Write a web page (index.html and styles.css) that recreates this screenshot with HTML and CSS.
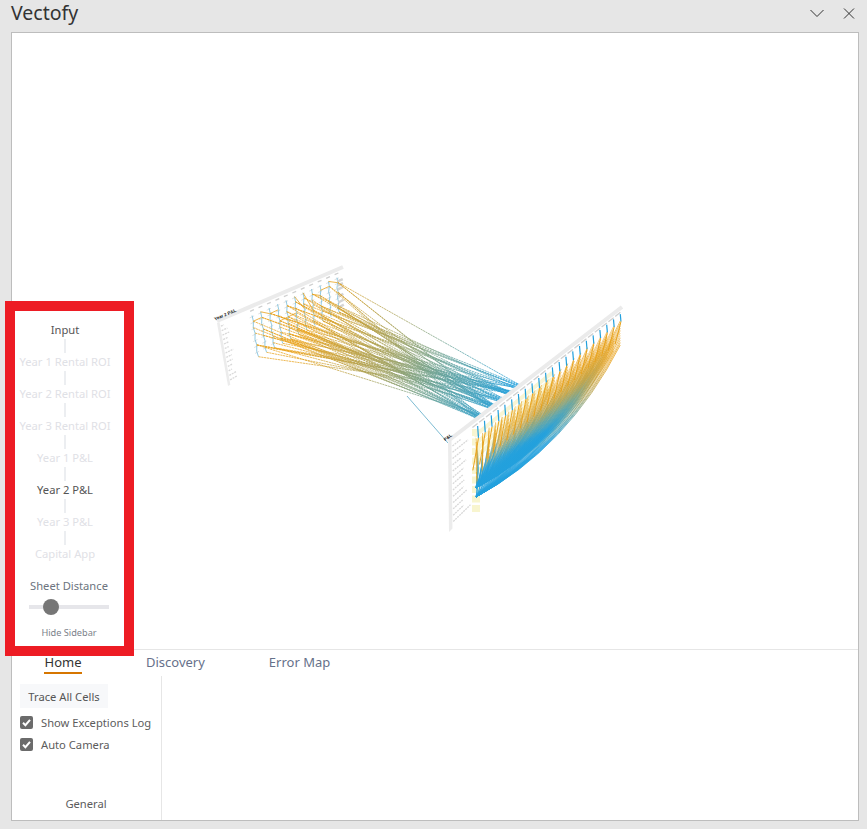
FILE: index.html
```html
<!DOCTYPE html>
<html lang="en">
<head>
  <meta charset="UTF-8" />
  <title>Vectofy</title>
  <link rel="stylesheet" href="styles.css">
</head>
<body>
  <div class="taskpane">
    <div class="titlebar">
      <span class="title">Vectofy</span>
      <div class="window-btns">
        <svg width="16" height="16" viewBox="0 0 16 16"><path d="M1.500 4 L8 10.500 L14.500 4" fill="none" stroke="#333" stroke-width="1"/></svg>
        <svg width="16" height="16" viewBox="0 0 16 16"><path d="M3 2.500 L13 12.500 M13 2.500 L3 12.500" fill="none" stroke="#333" stroke-width="1"/></svg>
      </div>
    </div>

    <div class="pane">
      <div class="canvas">
        <svg id="diagram" viewBox="12 33 846 616"></svg>
      </div>

      <div class="tabs">
        <span class="tab active">Home</span>
        <span class="tab tab-discovery">Discovery</span>
        <span class="tab tab-error">Error Map</span>
      </div>

      <div class="ribbon">
        <div class="group">
          <button class="trace-btn">Trace All Cells</button>
          <label class="check"><span class="box"><svg width="13" height="13" viewBox="0 0 13 13"><path d="M3 6.800 L5.400 9.200 L10 3.800" fill="none" stroke="#fff" stroke-width="2"/></svg></span>Show Exceptions Log</label>
          <label class="check"><span class="box"><svg width="13" height="13" viewBox="0 0 13 13"><path d="M3 6.800 L5.400 9.200 L10 3.800" fill="none" stroke="#fff" stroke-width="2"/></svg></span>Auto Camera</label>
          <div class="group-name">General</div>
        </div>
      </div>
    </div>

    <!-- sheet list, sits over the canvas -->
    <div class="sidebar">
      <div class="steps">
        <div class="step on">Input</div>
        <div class="link"></div>
        <div class="step">Year 1 Rental ROI</div>
        <div class="link"></div>
        <div class="step">Year 2 Rental ROI</div>
        <div class="link"></div>
        <div class="step">Year 3 Rental ROI</div>
        <div class="link"></div>
        <div class="step">Year 1 P&amp;L</div>
        <div class="link"></div>
        <div class="step on">Year 2 P&amp;L</div>
        <div class="link"></div>
        <div class="step">Year 3 P&amp;L</div>
        <div class="link"></div>
        <div class="step">Capital App</div>
      </div>
      <div class="distance">Sheet Distance</div>
      <div class="slider"><div class="thumb"></div></div>
      <div class="hide-link">Hide Sidebar</div>
    </div>
  </div>

  <script src="script.js"></script>
</body>
</html>
```

FILE: styles.css
```css
* {
  box-sizing: border-box;
}

html, body {
  margin: 0;
  height: 100%;
}

body {
  font-family: "Noto Sans", "Open Sans", sans-serif;
  background-color: #e6e6e6;
  color: #3c4043;
  overflow: hidden;
}

.taskpane {
  position: relative;
  height: 829px;
  display: flex;
  flex-direction: column;
  padding: 0 8px 8px 11px;
}

.titlebar {
  height: 32px;
  display: flex;
  align-items: flex-start;
  justify-content: space-between;
  flex-shrink: 0;
}

.title {
  font-size: 19.500px;
  line-height: 26px;
  color: #333;
}

.window-btns {
  display: flex;
  gap: 16px;
  padding: 6px 2px 0 0;
}

.pane {
  flex: 1;
  display: flex;
  flex-direction: column;
  background-color: #fff;
  border: 1px solid #bdbdbd;
  min-height: 0;
}

.canvas {
  height: 617px;
  border-bottom: 1px solid #e6e6e6;
  flex-shrink: 0;
}

#diagram {
  display: block;
  width: 100%;
  height: 100%;
}

.tabs {
  height: 26px;
  display: flex;
  font-size: 13px;
  color: #66718a;
  flex-shrink: 0;
}

.tab {
  height: 24px;
  line-height: 24px;
}

.tab.active {
  margin-left: 32px;
  width: 38px;
  text-align: center;
  color: #333;
  border-bottom: 2px solid #d67600;
}

.tab-discovery {
  margin-left: 64px;
}

.tab-error {
  margin-left: 64px;
}

.ribbon {
  flex: 1;
  display: flex;
  min-height: 0;
}

.group {
  width: 150px;
  border-right: 1px solid #e6e6e6;
  padding: 8px 0 0 8px;
  display: flex;
  flex-direction: column;
  align-items: flex-start;
}

.trace-btn {
  width: 88px;
  height: 24px;
  border: none;
  padding: 0;
  background-color: #f7f8fa;
  font-family: inherit;
  font-size: 11.200px;
  color: #555;
  margin-bottom: 8px;
}

.check {
  display: flex;
  align-items: center;
  height: 13px;
  margin-bottom: 9px;
  font-size: 11.200px;
  color: #5c5c5c;
  white-space: nowrap;
}

.box {
  width: 13px;
  height: 13px;
  margin-right: 8px;
  background-color: #6b6b6b;
  border-radius: 2px;
  display: block;
}

.box svg {
  display: block;
}

.group-name {
  margin-top: auto;
  width: 132px;
  text-align: center;
  font-size: 11.200px;
  color: #5c5c5c;
  line-height: 16px;
  margin-bottom: 8px;
}

.sidebar {
  position: absolute;
  left: 5px;
  top: 301px;
  width: 129px;
  height: 355px;
  background-color: #fff;
  border: 10px solid #ed1c24;
  display: flex;
  flex-direction: column;
  align-items: center;
}

.steps {
  width: 100px;
  margin-left: -9px;
  padding-top: 10px;
  display: flex;
  flex-direction: column;
  align-items: center;
}

.step {
  height: 18px;
  line-height: 18px;
  font-size: 11.200px;
  color: #dfe1e6;
  white-space: nowrap;
}

.step.on {
  color: #555;
}

.link {
  width: 2px;
  height: 14px;
  background-color: #eceef1;
}

.distance {
  margin-top: 14px;
  margin-left: -1px;
  height: 18px;
  line-height: 18px;
  font-size: 11.200px;
  color: #6c747e;
  white-space: nowrap;
}

.slider {
  position: relative;
  margin-top: 10px;
  margin-left: -1px;
  width: 80px;
  height: 4px;
  background-color: #e6e6ea;
}

.thumb {
  position: absolute;
  left: 14px;
  top: -6px;
  width: 16px;
  height: 16px;
  border-radius: 50%;
  background-color: #767676;
}

.hide-link {
  margin-top: 17px;
  margin-left: -1px;
  font-size: 9.200px;
  line-height: 14px;
  color: #7b818a;
}
```

FILE: script.js
```js
const svg = document.getElementById("diagram");
const NS = "http://www.w3.org/2000/svg";

// small seeded random so the picture is the same every time
let seed = 42;
function rnd() {
  seed = (seed * 16807) % 2147483647;
  return seed / 2147483647;
}

function add(tag, attrs, parent) {
  const el = document.createElementNS(NS, tag);
  for (const k in attrs) el.setAttribute(k, attrs[k]);
  (parent || svg).appendChild(el);
  return el;
}

function gradient(id, x1, y1, x2, y2, stops) {
  const g = add("linearGradient", { id, gradientUnits: "userSpaceOnUse", x1, y1, x2, y2 }, defs);
  stops.forEach(s => add("stop", { offset: s[0], "stop-color": s[1] }, g));
}

const defs = add("defs", {});
gradient("across", 310, 320, 510, 400, [[0, "#e8a21c"], [0.4, "#a3a25f"], [0.7, "#5fa3a3"], [1, "#22a0dd"]]);

// point on a sheet, u along the top edge and v down it
function onSheet(s, u, v) {
  const tx = s.a[0] + (s.b[0] - s.a[0]) * u, ty = s.a[1] + (s.b[1] - s.a[1]) * u;
  const bx = s.d[0] + (s.c[0] - s.d[0]) * u, by = s.d[1] + (s.c[1] - s.d[1]) * u;
  return [tx + (bx - tx) * v, ty + (by - ty) * v];
}

function drawSheet(s, title, labelEnd, rows) {
  // header strip
  const p1 = onSheet(s, 0, 0), p2 = onSheet(s, 1, 0);
  add("line", { x1: p1[0], y1: p1[1] - 2, x2: p2[0], y2: p2[1] - 2, stroke: "#ebebeb", "stroke-width": 4 });
  // label column, reads as blurred text at this distance
  add("polygon", {
    points: [onSheet(s, 0, 0), onSheet(s, 0.02, 0), onSheet(s, 0.02, 1), onSheet(s, 0, 1)].join(" "),
    fill: "#ececec"
  });
  for (let i = 0; i < rows; i++) {
    const v = (i + 1) / (rows + 1);
    const a = onSheet(s, 0.025, v), b = onSheet(s, labelEnd * (0.55 + rnd() * 0.45), v);
    add("line", {
      x1: a[0], y1: a[1], x2: b[0], y2: b[1],
      stroke: "#d9d9d9", "stroke-width": 1.300, "stroke-dasharray": "2 0.800"
    });
  }
  const t = add("text", {
    x: s.a[0] - 1, y: s.a[1] - 3,
    "font-size": 4.500, "font-weight": 700, "font-family": "Liberation Sans, sans-serif", fill: "#111",
    transform: `rotate(${s.titleTilt} ${s.a[0]} ${s.a[1]})`
  });
  t.textContent = title;
}

function drawHeaders(s, from, n) {
  for (let i = 0; i < n; i++) {
    const u = from + (1 - from) * i / n;
    const a = onSheet(s, u, 0.04), b = onSheet(s, u + 0.03, 0.04);
    add("line", { x1: a[0], y1: a[1], x2: b[0], y2: b[1], stroke: "#cfcfcf", "stroke-width": 1.300 });
  }
}

// ---- left sheet, Year 2 P&L
const left = { a: [217, 323], b: [343, 269], c: [345, 318], d: [228, 386], titleTilt: -23 };
drawSheet(left, "Year 2 P&L", 0.09, 13);
drawHeaders(left, 0.26, 11);

const sources = [];
const cols = 11;
// grey value cells behind the lines
for (let i = 0; i < cols; i++) {
  for (let j = 0; j < 7; j++) {
    const u = 0.27 + 0.68 * i / (cols - 1);
    const a = onSheet(left, u - 0.02, 0.14 + j * 0.1), b = onSheet(left, u + 0.015, 0.14 + j * 0.1);
    add("line", { x1: a[0], y1: a[1], x2: b[0], y2: b[1], stroke: "#e2e2e2", "stroke-width": 1 });
  }
}
for (let i = 0; i < cols; i++) {
  const u = 0.27 + 0.68 * i / (cols - 1);
  let prev = onSheet(left, u, 0.12);
  for (let j = 1; j < 8; j++) {
    const v = 0.12 + j * 0.1;
    const pt = onSheet(left, u + (j % 2 ? 0.004 : -0.004), v);
    add("line", {
      x1: prev[0], y1: prev[1], x2: pt[0], y2: pt[1],
      stroke: "#78bedd", "stroke-width": 0.9, opacity: 0.9
    });
    sources.push(pt);
    prev = pt;
  }
  // links over to the next column
  if (i < cols - 1) {
    const a = onSheet(left, u, 0.12 + 0.1 * Math.floor(rnd() * 4));
    const b = onSheet(left, u + 0.068, 0.22 + 0.1 * Math.floor(rnd() * 4));
    add("line", { x1: a[0], y1: a[1], x2: b[0], y2: b[1], stroke: "#e8a21c", "stroke-width": 0.8 });
  }
}
// grey block at the end of the grid
[0.2, 0.28, 0.36, 0.5, 0.62, 0.72].forEach(v => {
  const a = onSheet(left, 0.95, v), b = onSheet(left, 0.995, v);
  add("line", { x1: a[0], y1: a[1], x2: b[0], y2: b[1], stroke: "#d4d4d4", "stroke-width": 2.500 });
});

// ---- links between the two sheets
const bundles = [[518, 387, 12], [510, 393, 18], [501, 400, 13], [493, 407, 24], [480, 417, 24]];
bundles.forEach(b => {
  for (let i = 0; i < b[2]; i++) {
    const src = sources[Math.floor(rnd() * sources.length)];
    const spread = (i / b[2]) * 8 - 4;
    add("line", {
      x1: src[0], y1: src[1], x2: b[0] - spread, y2: b[1] + spread * 0.35,
      stroke: "url(#across)", "stroke-width": 0.75, "stroke-dasharray": "2.200 0.600"
    });
  }
});
add("line", { x1: 407, y1: 396, x2: 448, y2: 443, stroke: "#5ba9c6", "stroke-width": 0.8 });

// ---- right sheet, P&L
const right = { a: [448, 443], b: [622, 309], c: [622, 362], d: [449, 532], titleTilt: -38 };
drawSheet(right, "P&L", 0.125, 13);
drawHeaders(right, 0.14, 22);

// pale yellow input cells
for (let j = 0; j < 9; j++) {
  const y = 429 + j * 9.500;
  add("rect", { x: 472, y: y, width: 8, height: 7, fill: "#f8f5cf" });
}
[0.16, 0.26, 0.34, 0.42].forEach(v => {
  const a = onSheet(right, 0.15, v), b = onSheet(right, 0.6, v * 0.92);
  add("line", { x1: a[0], y1: a[1], x2: b[0], y2: b[1], stroke: "#f8f5d4", "stroke-width": 4 });
});

// the big fan from the two cells at the bottom left,
// each line blue at the source and orange where it lands
const fanCols = 23;
const c1 = [476, 488], c2 = [476, 497];
const fanStops = [[0, "#22a0dd"], [0.42, "#22a0dd"], [0.58, "#5ca6ae"], [0.74, "#b8a350"], [0.9, "#e8a21c"]];
for (let i = 0; i < fanCols; i++) {
  const u = 0.16 + 0.83 * i / (fanCols - 1);
  for (let j = 0; j < 11; j++) {
    const pt = onSheet(right, u, 0.2 + j * 0.045);
    const c = j >= 8 ? c2 : c1;
    const id = `fan${i}-${j}`;
    gradient(id, c[0], c[1], pt[0], pt[1], fanStops);
    const mx = (c[0] + pt[0]) / 2, my = (c[1] + pt[1]) / 2;
    const bend = Math.hypot(pt[0] - c[0], pt[1] - c[1]) * 0.13;
    add("path", {
      d: `M${c[0]} ${c[1]} Q${mx + bend * 0.7} ${my + bend} ${pt[0]} ${pt[1]}`,
      fill: "none", stroke: `url(#${id})`, "stroke-width": 0.8, opacity: 0.55 + rnd() * 0.45
    });
  }
}

// each column: blue at the top, then orange hanging down
for (let i = 0; i < fanCols - 1; i++) {
  const u = 0.17 + 0.82 * i / (fanCols - 2);
  const top = onSheet(right, u, 0.07);
  const mid = onSheet(right, u + 0.004, 0.22);
  const low = onSheet(right, u - 0.012, 0.32);
  const end = onSheet(right, u - 0.03, 0.55);
  add("line", { x1: top[0], y1: top[1], x2: mid[0], y2: mid[1], stroke: "#22a0dd", "stroke-width": 1.200 });
  add("path", {
    d: `M${mid[0]} ${mid[1]} Q${low[0] + 1} ${low[1]} ${end[0]} ${end[1]}`,
    fill: "none", stroke: "#e8a21c", "stroke-width": 1
  });
}
```
